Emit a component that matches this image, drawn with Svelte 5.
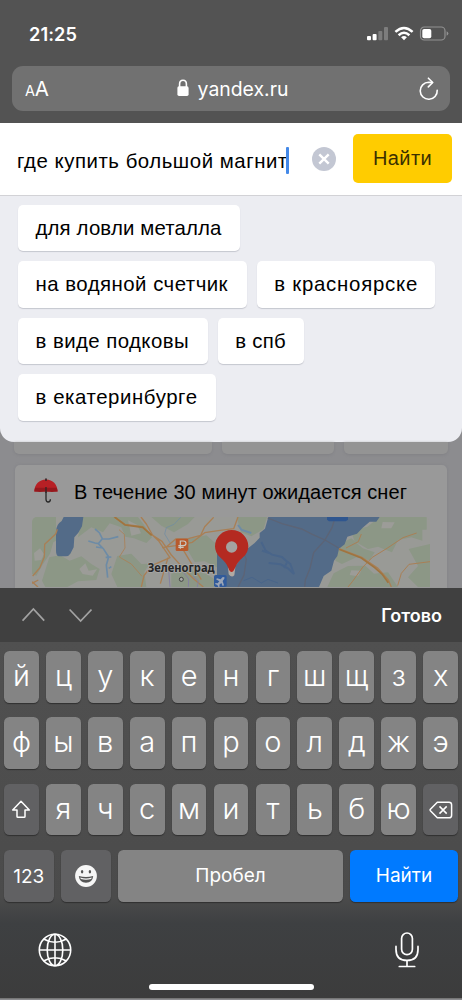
<script>
  const suggestions = [
    [{ text: 'для ловли металла', width: 222, spacing: 0.15 }],
    [
      { text: 'на водяной счетчик', width: 229, spacing: 0.48 },
      { text: 'в красноярске', width: 178, spacing: 0.76 }
    ],
    [
      { text: 'в виде подковы', width: 190, spacing: 0.44 },
      { text: 'в спб', width: 86.5, spacing: 0.3 }
    ],
    [{ text: 'в екатеринбурге', width: 198, spacing: 0.58 }]
  ];
  const rowOne = [...'йцукенгшщзх'];
  const rowTwo = [...'фывапролджэ'];
  const rowThree = [...'ячсмитьбю'];
</script>

<div class="phone">
  <header class="chrome">
    <div class="status">
      <span class="time">21:25</span>
      <svg class="indicators" width="84" height="16" viewBox="0 0 84 16">
        <g fill="#fff">
          <rect x="1" y="10" width="4" height="4.3" rx="1" />
          <rect x="6.6" y="8" width="4" height="6.3" rx="1" />
          <g fill="#7d7d7d">
            <rect x="12.3" y="5" width="4" height="9.3" rx="1" />
            <rect x="18" y="1" width="4" height="13.3" rx="1" />
          </g>
        </g>
        <g fill="none" stroke="#fff" stroke-width="2.5">
          <path d="M29.4 5.9 Q38 -1.9 46.6 5.9" />
          <path d="M32.6 9.2 Q38 4.4 43.4 9.2" />
        </g>
        <path d="M35.1 11.3Q38 8.9 40.9 11.3L38 14.3Z" fill="#fff" />
        <rect x="54.5" y="1" width="24.5" height="13" rx="3.8" fill="none" stroke="#929292" stroke-width="1.2" />
        <rect x="56.3" y="2.9" width="9" height="9.3" rx="1.8" fill="#fff" />
        <path d="M80.6 5.2Q82.4 6 82.4 7.5T80.6 9.8Z" fill="#929292" />
      </svg>
    </div>
    <div class="address">
      <span class="aa"><small>A</small>A</span>
      <span class="host">
        <svg width="12" height="18" viewBox="0 0 12 18">
          <path d="M2.6 8V5Q2.6 1.2 6 1.2T9.4 5V8" fill="none" stroke="#fff" stroke-width="1.6" />
          <rect x=".4" y="7.3" width="11.2" height="9.6" rx="1.6" fill="#fff" />
        </svg>
        <span>yandex.ru</span>
      </span>
      <svg class="reload" width="20" height="24" viewBox="0 0 20 24" fill="none" stroke="#fff" stroke-width="1.6" stroke-linecap="round" stroke-linejoin="round">
        <path d="M18.2 13.2A8.5 8.5 0 1 1 9.7 5.3L13.4 5.5" />
        <path d="M9.4 1.2L13.7 5.5L9.3 9.9" />
      </svg>
    </div>
  </header>

  <main>
    <section class="panel">
      <div class="search">
        <div class="field"><span class="query">где купить большой магнит</span><i class="caret"></i></div>
        <svg class="clear" width="24" height="24" viewBox="0 0 24 24">
          <circle cx="12" cy="12" r="12" fill="#c3c7d3" />
          <path d="M7.3 7.3L16.7 16.7M16.7 7.3L7.3 16.7" stroke="#fff" stroke-width="2.4" />
        </svg>
        <button class="find">Найти</button>
      </div>
      <div class="suggestions">
        {#each suggestions as row}
          <div class="chips">
            {#each row as chip}
              <span class="chip" style="width: {chip.width}px; letter-spacing: {chip.spacing}px">{chip.text}</span>
            {/each}
          </div>
        {/each}
      </div>
    </section>

    <div class="tiles"><i></i><i></i><i></i></div>

    <article class="weather">
      <div class="headline">
        <svg width="24" height="25" viewBox="0 0 24 25">
          <path d="M12 1V21.2Q12.1 24 14.2 24Q16.4 24 16.4 21.2" fill="none" stroke="#272727" stroke-width="1.3" />
          <path d="M.3 13.6C.6 6 5.2 1.8 12 1.6C18.8 1.8 23.3 6 23.6 13.6Q18 12.4 12 13.6Q6 12.4 .3 13.6Z" fill="#b72025" />
          <path d="M.3 13.6Q.4 11.6 1.2 9.7H22.7Q23.5 11.6 23.6 13.6Q18 14.2 12 13.6Q6 14.2 .3 13.6Z" fill="#96181d" />
          <path d="M12 .3V3M12 9V15" stroke="#272727" stroke-width="1.2" />
        </svg>
        <span>В течение 30 минут ожидается снег</span>
      </div>
      <svg class="map" width="398" height="70" viewBox="12 129 1194 210">
        <rect x="12" y="129" width="1194" height="210" fill="#999a96" />
        <g fill="#8c9786">
          <path d="M12 129H84V200L76 205L66 239L45 270L25 305L12 300Z" />
          <path d="M165 129H330L352 158L372 190L355 207L318 193L292 188L280 160L245 148L225 175L190 160L150 190L158 150Z" />
          <path d="M64 250L96 244L125 260L160 247L190 270L215 285L205 318L150 322L118 339H52L42 320Z" />
          <path d="M268 246L310 239L340 270L364 269L349 294L355 339H268L250 300Z" />
          <path d="M370 129H500L480 150L438 175L400 155Z" />
          <path d="M470 198L535 184L571 215L567 280L530 262L500 264L480 230Z" />
          <path d="M430 299L475 285L535 300L558 315V339H430Z" />
          <path d="M626 129H717L707 165L670 187L639 175Z" />
          <path d="M1055 129H1196V167H1183V200L1150 190L1110 198L1092 235L1050 218L1020 225L980 202L968 170L1018 158Z" />
          <path d="M935 210L970 193L1004 223L1040 235L1025 259L985 250L942 270L922 260Z" />
          <path d="M917 298L960 276L1012 275L1038 299L1080 295L1110 339H898Z" />
          <path d="M1142 225L1206 210V339H1170L1140 310L1170 276Z" />
        </g>
        <g fill="#9c9c98">
          <path d="M18 237L36 223L48 240L40 258L20 260Z" />
          <path d="M154 285L172 268L182 290L207 286L194 305L164 300Z" />
          <path d="M300 139L328 153L339 178L310 185Z" />
          <path d="M1064 144L1100 145L1090 163L1060 163Z" />
          <path d="M970 289L1000 290L990 307L965 303Z" />
        </g>
        <g fill="#536b88">
          <path d="M107 129H166L162 157L151 176L139 190L137 220L127 239Q122 247 113 247H93Q84 246 84 230V174Q84 151 101 141Z" />
          <path d="M721 129H1055L1045 143L1025 143L1004 161L987 179L958 188L950 211L933 224L928 246L918 260L910 290L887 306L873 339H585L567 320V220L611 292L661 222L680 207L695 191V177L711 164Z" />
        </g>
        <g fill="none" stroke="#6d8ba6" stroke-width="5">
          <path d="M201 165L214 176L223 194L211 209L226 224L242 249L235 273L239 311M181 201L201 207L211 209L222 195L243 195L271 188M233 250L250 249M225 222L204 219M242 283L250 278" />
          <path d="M630 153L641 168L670 177" stroke-width="6" />
          <path d="M458 130L438 151L415 161L410 180L427 208" stroke-width="2" />
        </g>
        <g fill="none" stroke="#49658a" stroke-width="6">
          <path d="M700 204L713 230L732 242L762 249L778 264L768 282M702 230L728 239M722 267L758 271L781 284L798 300L787 270L777 262" />
          <path d="M647 320L672 310L700 327L720 316L750 327" stroke-width="3" />
        </g>
        <g fill="none" stroke="#5c6476" stroke-width="4">
          <path d="M719 132L762 149L821 165L853 181L891 198L932 222" />
          <path d="M921 132L912 161L890 199L857 236L846 283L832 318L830 339M640 225L655 255L648 303L630 339" />
        </g>
        <g fill="none" stroke="#a97f55" stroke-width="4" stroke-linejoin="round">
          <path d="M88 166L83 180L50 211L49 249L35 282L14 306M12 323L30 339M12 328L31 318" />
          <path d="M258 129L291 151L344 158L365 178L402 202L430 243L480 298L500 317L526 339M339 129L355 150L374 184L393 202L426 251L371 275L348 305L340 339" />
          <path d="M273 167L289 181L291 222L274 249L310 270L342 307" stroke-width="2.5" />
          <path d="M420 251L397 329M402 221L443 215L493 205L530 176L571 170L617 164L630 129M557 130L530 158L518 184L481 194L443 195L414 220M458 215L485 260L520 317" />
          <path d="M933 224L1000 249L1050 283L1081 318L1090 339" />
          <path d="M954 222L991 203L1000 180M1001 283L1033 250L1077 223L1125 191L1166 177M1109 335L1120 298L1143 271L1206 263M1004 280L973 323L960 339" stroke-width="3" />
        </g>
        <g fill="none" stroke="#a0743f" stroke-width="5">
          <path d="M933 226L1000 252L1040 281L1062 300L1081 326M260 129L291 153L344 160L371 184" />
        </g>
        <g fill="none" stroke="#8580a0" stroke-width="3">
          <path d="M421 278L426 339M466 294L482 315L481 339M495 307L511 320L508 339" />
        </g>
        <path d="M897 129H960V137L953 142H903L897 137Z" fill="#2f568f" />
        <rect x="443" y="194" width="38" height="37" rx="4" fill="#b85a2d" />
        <path d="M457 224V201H466Q474 201 474 208T466 215H451M451 220H467" fill="none" stroke="#c8c8c3" stroke-width="3.5" />
        <rect x="558" y="303" width="38" height="36" rx="5" fill="#315b9b" />
        <path d="M589 309L583 310L578 316L567 313L564 316L574 322L569 328L563 327L561 330L568 333L571 339L575 338L574 332L580 327L584 336L588 334L584 321L589 314Z" fill="#9ba5b6" />
        <path d="M600 280H622L619 304Q611 313 602 301Z" fill="#b1aaa3" />
        <path d="M611 294Q605 294 601 282Q595 266 576 250Q561 236 561 217Q561 196 576 182Q591 168 611 168Q632 168 646 182Q661 197 661 217Q661 237 645 250Q627 266 621 282Q616 294 611 294Z" fill="#b42a21" />
        <circle cx="611" cy="219" r="17" fill="#a4a3a0" />
        <text x="359" y="293" textLength="201" lengthAdjust="spacingAndGlyphs">Зеленоград</text>
        <circle cx="460" cy="316" r="6" fill="#aaa" stroke="#303030" stroke-width="2.5" />
      </svg>
    </article>
  </main>

  <footer class="keyboard">
    <div class="toolbar">
      <svg width="70" height="16" viewBox="0 0 70 16" fill="none" stroke="#a2a2a2" stroke-width="1.7">
        <path d="M.6 13.7L11.4 2L22.2 13.7M47.6 2.5L58.6 14L69.5 2.5" />
      </svg>
      <strong>Готово</strong>
    </div>
    <div class="keys">
      <div class="row">{#each rowOne as letter}<span class="key">{letter}</span>{/each}</div>
      <div class="row">{#each rowTwo as letter}<span class="key">{letter}</span>{/each}</div>
      <div class="row">
        <span class="key dark">
          <svg width="20" height="19" viewBox="0 0 20 19"><path d="M10 1.3L18.3 10H14V16.4Q14 17.3 13.1 17.3H6.9Q6 17.3 6 16.4V10H1.7Z" fill="none" stroke="#fff" stroke-width="1.5" stroke-linejoin="round" /></svg>
        </span>
        {#each rowThree as letter}<span class="key">{letter}</span>{/each}
        <span class="key dark">
          <svg width="24" height="18" viewBox="0 0 24 18" fill="none" stroke="#fff" stroke-width="1.5" stroke-linejoin="round">
            <path d="M8.3 1.2H20Q22.6 1.2 22.6 3.8V14.2Q22.6 16.8 20 16.8H8.3L1.4 9.7Q.8 9 1.4 8.3Z" />
            <path d="M10.5 5.4L17.7 12.6M17.7 5.4L10.5 12.6" />
          </svg>
        </span>
      </div>
      <div class="row actions">
        <span class="key dark numbers">123</span>
        <span class="key dark">
          <svg width="22" height="22" viewBox="0 0 22 22">
            <circle cx="11" cy="11" r="10.9" fill="#f6f6f6" />
            <ellipse cx="7.1" cy="6.8" rx="1.2" ry="1.8" fill="#555" /><ellipse cx="14.9" cy="6.8" rx="1.2" ry="1.8" fill="#555" />
            <path d="M3.8 11Q11 13 18.2 11Q17.6 17.5 11 17.7Q4.4 17.5 3.8 11Z" fill="#555" />
            <path d="M5.2 12.5Q11 14.3 16.8 12.5L16.2 14Q11 15.5 5.8 14Z" fill="#f6f6f6" />
          </svg>
        </span>
        <span class="key word">Пробел</span>
        <span class="key word go">Найти</span>
      </div>
    </div>
    <div class="tools">
      <svg width="34" height="34" viewBox="0 0 34 34" fill="none" stroke="#fff" stroke-width="1.6">
        <circle cx="17" cy="17" r="15.7" />
        <ellipse cx="17" cy="17" rx="7.8" ry="15.7" />
        <path d="M17 1.3V32.7M1.3 17H32.7M5.6 6Q17 12.6 28.4 6M5.6 28Q17 21.4 28.4 28" />
      </svg>
      <svg width="24" height="36" viewBox="0 0 24 36" fill="none" stroke="#fff" stroke-width="1.7" stroke-linecap="round">
        <rect x="6.6" y="1" width="10.8" height="21.7" rx="5.4" />
        <path d="M1 14.4V17.4Q1 28.4 12 28.4T23 17.4V14.4M12 28.4V34.4M4.3 34.5H19.7" />
      </svg>
    </div>
    <div class="home"></div>
  </footer>
</div>

<style>
  :global(body) { margin: 0; }
  .phone {
    width: 462px; height: 1000px; overflow: hidden; display: flex; flex-direction: column;
    background: #8c8c8f; font-family: "Liberation Sans", Arial, sans-serif; color: #000;
  }
  svg { display: block; flex: none; }
  .chrome { box-sizing: border-box; height: 123px; flex: none; background: #535353; color: #fff; padding: 0 12px; font-family: Inter, sans-serif; }
  .status { height: 66px; display: flex; justify-content: space-between; align-items: flex-start; }
  .time { margin: 23px 0 0 17px; font-size: 18.2px; line-height: 22px; font-weight: 600; letter-spacing: .1px; }
  .indicators { margin-top: 26px; }
  .address {
    height: 45px; box-sizing: border-box; padding: 0 11px 0 13px; border-radius: 11px; background: #717171;
    display: grid; grid-template-columns: 1fr auto 1fr; align-items: center;
  }
  .aa { font-size: 20.5px; line-height: 24px; letter-spacing: -.2px; padding-top: 3px; }
  .aa small { font-size: 14.5px; }
  .host { display: flex; align-items: center; gap: 9px; font-size: 19.4px; line-height: 24px; margin-left: 1px; }
  .host svg { margin-top: -2px; }
  .reload { justify-self: end; }

  main { height: 465px; flex: none; overflow: hidden; }
  .panel { height: 319px; border-radius: 0 0 14px 14px; overflow: hidden; background: #ecedf2; }
  .search { box-sizing: border-box; height: 72.5px; background: #fff; border-bottom: 1px solid #d2d2d6; padding: 11px 10px 0 17px; display: flex; align-items: flex-start; }
  .field { width: 295px; height: 49px; display: flex; align-items: center; white-space: nowrap; font-size: 20.4px; }
  .query { letter-spacing: .53px; padding-top: 5px; margin-right: -1.5px; }
  .caret { width: 2.5px; height: 27px; background: #4489e8; border-radius: 1px; margin-top: 3px; }
  .clear { margin-top: 13px; }
  .find { margin: 0 0 0 auto; width: 99px; height: 49px; padding: 0; border: 0; border-radius: 5px; background: #ffcc00; color: #3b3000; font: 20px "Liberation Sans", Arial, sans-serif; letter-spacing: .4px; }
  .suggestions { padding: 9.5px 18px; display: flex; flex-direction: column; gap: 10px; }
  .chips { display: flex; gap: 9.7px; height: 46.4px; }
  .chip { box-sizing: border-box; padding-left: 17.5px; line-height: 46px; font-size: 20.4px; white-space: nowrap; background: #fff; border-radius: 5px; box-shadow: 0 1px 1px #c5c7cf; }
  .tiles { height: 12px; padding: 0 14px; display: grid; grid-template-columns: 198px 112px 104px; gap: 10px; }
  .tiles i { background: #949494; border-radius: 0 0 5px 5px; box-shadow: 0 1px 3px #828286; }
  .weather { margin: 11px 15px 0; height: 125px; background: #999; border-radius: 5px 5px 0 0; box-shadow: 0 0 3px #838387; }
  .headline { box-sizing: border-box; height: 52px; padding: 13px 0 0 19px; display: flex; gap: 16px; font-size: 20px; line-height: 28px; white-space: nowrap; letter-spacing: .07px; }
  .map { margin-left: 17px; border-radius: 5px 5px 0 0; }
  .map text { font: 700 35px "Noto Sans", sans-serif; fill: #252525; stroke: #aaa; stroke-width: 4px; paint-order: stroke; }

  .keyboard { height: 411px; box-sizing: border-box; flex: none; border-bottom: 1px solid #777; background: linear-gradient(#505050 53px, #4b4b4b 310px, #3e4042 335px, #3c3c3c); color: #fff; font-family: Inter, sans-serif; }
  .toolbar { height: 53.5px; box-sizing: border-box; padding: 0 20px 0 22px; background: #404040; display: flex; justify-content: space-between; align-items: center; }
  .toolbar strong { font-size: 18px; font-weight: 600; padding-top: 2px; }
  .keys { padding: 9.5px 4px 0; display: flex; flex-direction: column; gap: 14.9px; }
  .row { display: grid; grid-template-columns: repeat(11, 1fr); gap: 7.1px; height: 51.5px; }
  .key { display: flex; align-items: center; justify-content: center; border-radius: 5.5px; background: #848484; box-shadow: 0 1px 1px #303030; font-size: 29px; font-weight: 300; line-height: 40px; padding-bottom: 2px; height: 49.5px; }
  .dark { background: #616163; padding-bottom: 0; height: 51.5px; }
  .actions { grid-template-columns: 49.5px 50.3px 224.3px 1fr; gap: 7.3px; }
  .numbers { box-sizing: border-box; padding-top: 2px; font-size: 19px; font-weight: 400; }
  .word { font-size: 19px; font-weight: 400; padding-bottom: 0; height: 51.5px; }
  .go { background: #007aff; }
  .tools { display: flex; justify-content: space-between; align-items: center; height: 36px; padding: 0 43px 0 38px; margin-top: 30.5px; }
  .home { width: 165px; height: 6.5px; border-radius: 4px; background: #fff; margin: 15.5px auto 0; }
</style>
